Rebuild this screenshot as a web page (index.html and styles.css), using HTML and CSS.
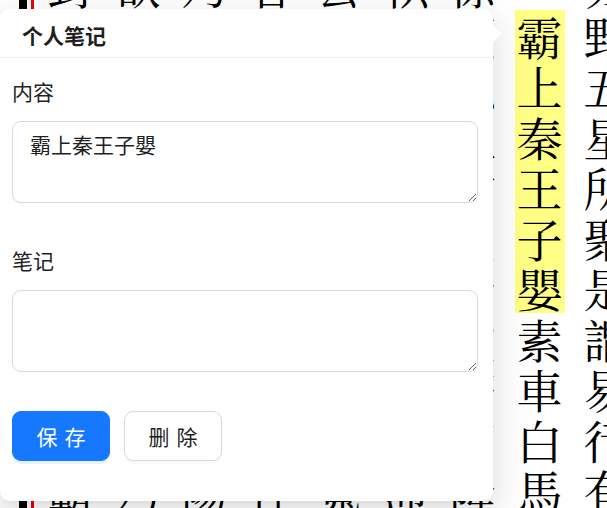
FILE: index.html
```html
<!DOCTYPE html>
<html lang="zh">
<head>
<meta charset="utf-8">
<title>个人笔记</title>
<link rel="stylesheet" href="styles.css">
</head>
<body>
<div class="page">
  <div class="rule"></div>
  <div class="col"><span class="ch">封</span><span class="ch">秦</span><span class="ch">重</span><span class="ch">寶</span><span class="ch">財</span><span class="ch">物</span><span class="ch">府</span><span class="ch">庫</span><span class="ch">還</span><span class="ch">軍</span><span class="ch">霸</span></div>
  <div class="col"><span class="ch">欲</span><span class="ch">止</span><span class="ch">宮</span><span class="ch">休</span><span class="ch">舍</span><span class="ch">樊</span><span class="ch">噲</span><span class="ch">張</span><span class="ch">良</span><span class="ch">諫</span><span class="ch">乃</span></div>
  <div class="col"><span class="ch">乃</span><span class="ch">以</span><span class="ch">秦</span><span class="ch">王</span><span class="ch">屬</span><span class="ch">吏</span><span class="ch">遂</span><span class="ch">西</span><span class="ch">入</span><span class="ch">咸</span><span class="ch">陽</span></div>
  <div class="col"><span class="ch">容</span><span class="ch">且</span><span class="ch">人</span><span class="ch">已</span><span class="ch">服</span><span class="ch">降</span><span class="ch">又</span><span class="ch">殺</span><span class="ch">之</span><span class="ch">不</span><span class="ch">祥</span></div>
  <div class="col"><span class="ch">公</span><span class="ch">曰</span><span class="ch">始</span><span class="ch">懷</span><span class="ch">王</span><span class="ch">遣</span><span class="ch">我</span><span class="ch">固</span><span class="ch">以</span><span class="ch">能</span><span class="ch">寬</span></div>
  <div class="col"><span class="ch">軹</span><span class="ch">道</span><span class="ch">旁</span><span class="ch">諸</span><span class="ch">將</span><span class="ch">或</span><span class="ch">言</span><span class="ch">誅</span><span class="ch">秦</span><span class="ch">王</span><span class="ch">沛</span></div>
  <div class="col"><span class="ch">係</span><span class="ch">頸</span><span class="ch">以</span><span class="ch">組</span><span class="ch">封</span><span class="ch">皇</span><span class="ch">帝</span><span class="ch">璽</span><span class="ch">符</span><span class="ch">節</span><span class="ch">降</span></div>
  <div class="col"><span class="ch"> </span><span class="ch hl">霸</span><span class="ch hl">上</span><span class="ch hl">秦</span><span class="ch hl">王</span><span class="ch hl">子</span><span class="ch hl">嬰</span><span class="ch">素</span><span class="ch">車</span><span class="ch">白</span><span class="ch">馬</span></div>
  <div class="col"><span class="ch">分</span><span class="ch">野</span><span class="ch">五</span><span class="ch">星</span><span class="ch">所</span><span class="ch">聚</span><span class="ch">是</span><span class="ch">謂</span><span class="ch">易</span><span class="ch">行</span><span class="ch">有</span></div>
</div>

<div class="popover">
  <div class="arrow"></div>
  <div class="title">个人笔记</div>
  <div class="content">
    <div class="field">
      <div class="label">内容</div>
      <textarea class="input">霸上秦王子嬰</textarea>
    </div>
    <div class="field">
      <div class="label">笔记</div>
      <textarea class="input"></textarea>
    </div>
    <div class="actions">
      <button class="btn primary"><span>保存</span></button>
      <button class="btn"><span>删除</span></button>
    </div>
  </div>
</div>
</body>
</html>
```

FILE: styles.css
```css
html, body {
  margin: 0;
  padding: 0;
}

body {
  width: 607px;
  height: 508px;
  overflow: hidden;
  position: relative;
  background: #fff;
  font-family: "Noto Sans CJK SC", "Noto Sans", sans-serif;
  color: #1f1f1f;
}

/* background: vertical classical text */
.page {
  display: flex;
  justify-content: flex-end;
  margin-top: -41px;
  margin-right: -33px;
  padding-left: 19px;
}

.rule {
  width: 15px;
  height: 560px;
  margin-right: auto;
  background: linear-gradient(to right, #000 0, #000 8px, #fff 8px, #fff 12px, #e00 12px, #e00 15px);
}

.col {
  width: 67px;
  display: flex;
  flex-direction: column;
  align-items: center;
}

.ch {
  display: block;
  width: 50px;
  height: 50.5px;
  line-height: 50.5px;
  text-align: center;
  font-size: 46px;
  font-family: "AR PL UKai TW", "AR PL UKai CN", "TW-Kai", "Noto Serif CJK TC", "Noto Sans CJK TC", serif;
  color: #000;
}

.hl {
  background: #ffff85;
}

/* popover */
.popover {
  position: absolute;
  left: 0;
  top: 9px;
  width: 493px;
  height: 492px;
  background: #fff;
  border-radius: 10px;
  box-shadow: 0 9px 24px 0 rgba(0, 0, 0, 0.08),
              0 4px 9px -6px rgba(0, 0, 0, 0.12),
              0 13px 42px 12px rgba(0, 0, 0, 0.05);
}

.arrow {
  position: absolute;
  right: -9px;
  top: 15px;
  width: 10px;
  height: 19px;
  background: #fff;
  clip-path: polygon(0 0, 100% 50%, 0 100%);
}

.title {
  padding: 10px 22px 5px;
  font-size: 21px;
  line-height: 33px;
  font-weight: 700;
  color: #1f1f1f;
  border-bottom: 1px solid #f0f0f0;
}

.content {
  padding: 17px 15px 0 12px;
}

.field + .field {
  margin-top: 41px;
}

.label {
  font-size: 21px;
  line-height: 33px;
  color: #1f1f1f;
}

.input {
  display: block;
  box-sizing: border-box;
  width: 100%;
  height: 82px;
  margin-top: 13px;
  padding: 6px 17px;
  border: 1px solid #d9d9d9;
  border-radius: 9px;
  font-family: "Noto Sans CJK SC", "Noto Sans", sans-serif;
  font-size: 21px;
  line-height: 33px;
  color: #1f1f1f;
  background: #fff;
  resize: vertical;
  outline: none;
}

.actions {
  display: flex;
  gap: 14px;
  margin-top: 39px;
}

.btn {
  box-sizing: border-box;
  width: 98px;
  height: 50px;
  padding: 0;
  border: 1px solid #d9d9d9;
  border-radius: 9px;
  background: #fff;
  color: #1f1f1f;
  font-family: "Noto Sans CJK SC", "Noto Sans", sans-serif;
  font-size: 21px;
  letter-spacing: 0.34em;
  box-shadow: 0 3px 0 rgba(0, 0, 0, 0.02);
}

.btn span {
  margin-right: -0.34em;
}

.primary {
  background: #1677ff;
  border-color: #1677ff;
  color: #fff;
  box-shadow: 0 3px 0 rgba(5, 145, 255, 0.1);
}
```
